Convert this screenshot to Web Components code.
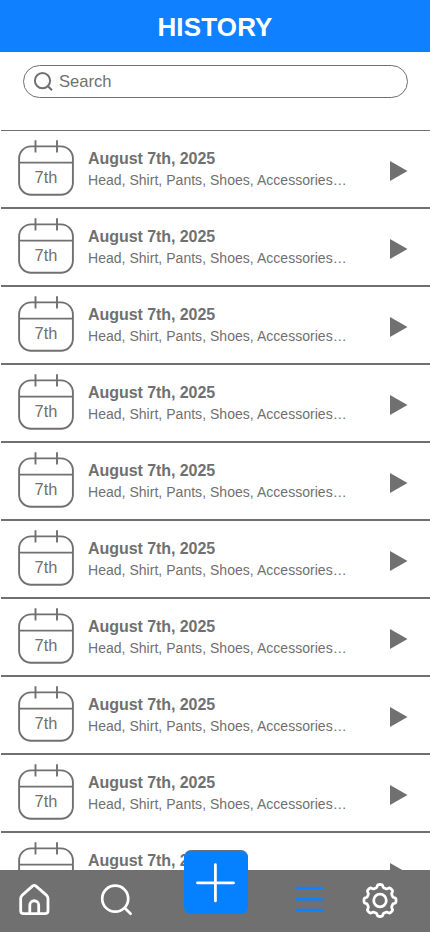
<!DOCTYPE html>
<html lang="en">
<head>
<meta charset="utf-8">
<title>History</title>
<style>
html,body{margin:0;height:100%;overflow:hidden;background:#fff}
body{font-family:"Liberation Sans",Arial,sans-serif;color:#707070}
</style>
</head>
<body>
<history-app></history-app>
<script>
const define = (name, html, setup) => customElements.define(name, class extends HTMLElement {
  constructor() {
    super();
    const t = document.createElement('template');
    t.innerHTML = html;
    this.attachShadow({mode: 'open'}).append(t.content.cloneNode(true));
  }
  connectedCallback() { if (setup) setup(this.shadowRoot, this); }
});

define('page-header', `<style>
:host{display:flex;flex:none;height:52px;background:#0f80ff;color:#fff;align-items:center;justify-content:center}
h1{margin:2px 0 0;font-size:26px;line-height:30px;font-weight:700;letter-spacing:.15px}
</style><h1><slot></slot></h1>`);

define('search-field', `<style>
:host{display:flex;flex:none;box-sizing:border-box;height:33px;margin:13px 22px 32px 23px;border:1px solid #707070;border-radius:17px;align-items:center;padding-left:9px;gap:5px;font-size:16.6px;line-height:20px}
svg{display:block;flex:none}
</style><svg width="21" height="21" viewBox="0 0 21 21" fill="none" stroke="#707070" stroke-width="2"><circle cx="9.5" cy="9.7" r="7.6"/><path d="M14.7 15 19 19.3"/></svg><span><slot></slot></span>`);

define('calendar-icon', `<style>
:host{display:grid;width:58px;height:58px;flex:none}
svg,span{grid-area:1/1}
svg{display:block}
span{text-align:center;font-size:16.4px;line-height:20px;padding-top:28px}
</style><svg width="58" height="58" viewBox="0 0 58 58" fill="none" stroke="#707070" stroke-width="1.9"><rect x="2.1" y="7.4" width="53.8" height="48.4" rx="12"/><path d="M2 23.6h54M18.5 1.3v12.2M40 1.3v12.2"/></svg><span><slot></slot></span>`);

define('history-row', `<style>
:host{display:flex;flex:none;box-sizing:border-box;height:78px;border-bottom:2px solid #707070;margin-left:1px;padding:8px 22px 0 16px;align-items:flex-start}
.text{flex:1;padding:10px 0 0 13px;white-space:nowrap}
.date{font-size:16px;font-weight:700;line-height:20px;letter-spacing:-.06px}
.items{font-size:14px;line-height:18px;margin-top:2px;letter-spacing:.03px}
.play{display:block;margin-top:22px;flex:none}
</style><calendar-icon>7th</calendar-icon><div class="text"><div class="date"><slot name="date"></slot></div><div class="items"><slot name="items"></slot></div></div>
<svg class="play" width="18" height="20" viewBox="0 0 18 20"><path d="M0 0 17.5 10 0 20z" fill="#707070"/></svg>`);

define('history-list', `<style>
:host{display:block;flex:1;min-height:0;overflow:hidden}
.rule{height:1px;background:#707070;margin-left:1px}
</style><div class="rule"></div><slot></slot>`);

define('nav-bar', `<style>
:host{display:grid;position:absolute;left:0;right:0;bottom:0;height:62px;background:#707070;grid-template-columns:68px 98px 99px 90px 50px 25px;justify-items:center;align-items:center}
svg{display:block;fill:none;stroke:#fff;stroke-linecap:round;stroke-linejoin:round}
.add{align-self:start;margin-top:-20px;width:64px;height:64px;display:grid;place-items:center;background:#0580ff;border-radius:7px;box-sizing:border-box;border-top:1px solid #707070}
</style>
<svg width="36" height="36" viewBox="0 0 36 36" stroke-width="2.8"><path d="M4.7 15.6Q4.7 13.7 6 12.4L16.7 2.9Q18.2 1.8 19.7 2.9L30.7 12.4Q32 13.7 32 15.6V27.7Q32 30.7 29 30.7H7.7Q4.7 30.7 4.7 27.7Z"/><path d="M13.8 30.7V22.2a4.45 4.45 0 0 1 8.9 0V30.7"/></svg>
<svg width="36" height="36" viewBox="0 0 36 36" stroke-width="2.7"><circle cx="16.2" cy="15.7" r="13"/><path d="m26 25.3 5.6 5.4"/></svg>
<div class="add"><svg width="42" height="42" viewBox="0 0 42 42" stroke-width="2.8"><path d="M20.4 2.7v36.2M2.5 20.9h36"/></svg></div>
<svg width="28" height="36" viewBox="0 0 28 36" style="stroke:#0f80ff;stroke-linecap:butt" stroke-width="2.5"><path d="M0 5h27.4M0 16.2h27.4M0 27h27.4"/></svg>
<svg width="38" height="38" viewBox="-19 -18.5 38 38" stroke-width="2.8"><path class="gear"/><circle r="6.3"/></svg>`,
root => {
  // Eight flat-topped teeth around the hub
  let d = '';
  for (let i = 0; i < 240; i++) {
    const a = i / 240 * Math.PI * 2;
    const r = 14.6 + 1.45 * Math.tanh(2.2 * Math.cos(8 * a));
    d += (i ? 'L' : 'M') + (r * Math.cos(a)).toFixed(2) + ' ' + (r * Math.sin(a)).toFixed(2);
  }
  root.querySelector('.gear').setAttribute('d', d + 'Z');
});

define('history-app', `<style>
:host{display:flex;flex-direction:column;position:relative;width:430px;height:932px;overflow:hidden;background:#fff}
</style><page-header>HISTORY</page-header><search-field>Search</search-field><history-list></history-list><nav-bar></nav-bar>`,
root => {
  root.querySelector('history-list').innerHTML = Array.from({length: 10}, () =>
    '<history-row><span slot="date">August 7th, 2025</span><span slot="items">Head, Shirt, Pants, Shoes, Accessories…</span></history-row>').join('');
});
</script>
</body>
</html>
